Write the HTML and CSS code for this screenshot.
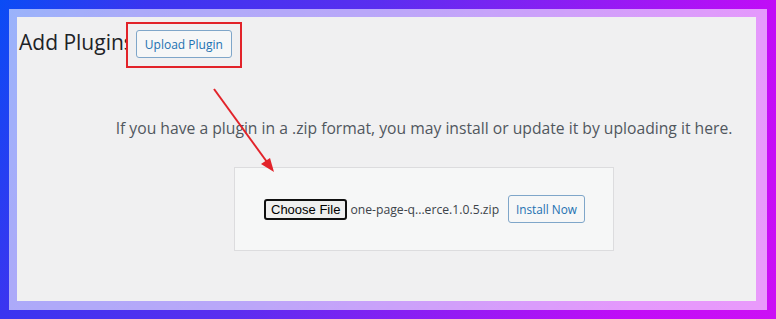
FILE: index.html
```html
<!DOCTYPE html>
<html lang="en">

<head>
    <meta charset="UTF-8">
    <meta name="viewport" content="width=device-width, initial-scale=1.0">
    <title>Add Plugins</title>
    <link rel="stylesheet" href="styles.css">
</head>

<body>
    <div class="frame">
        <div class="frame-inner">
            <div class="panel">
                <div class="page-header">
                    <h1>Add Plugins</h1>
                    <div class="highlight">
                        <button class="wp-button">Upload Plugin</button>
                    </div>
                </div>

                <!-- annotation arrow -->
                <svg class="arrow" width="80" height="90" viewBox="0 0 80 90">
                    <line x1="2" y1="2" x2="55" y2="75" stroke="#e2232a" stroke-width="2" />
                    <polygon points="62,85 49,77 58,71" fill="#e2232a" />
                </svg>

                <div class="upload-wrap">
                    <p class="install-help">If you have a plugin in a .zip format, you may install or update it by uploading it here.</p>
                    <form class="upload-form">
                        <span class="file-button">Choose File</span>
                        <span class="file-name">one-page-q...erce.1.0.5.zip</span>
                        <button type="button" class="wp-button">Install Now</button>
                    </form>
                </div>
            </div>
        </div>
    </div>
</body>

</html>
```

FILE: styles.css
```css
body {
    margin: 0;
    font-family: "Open Sans", "Noto Sans", sans-serif;
}

.frame {
    width: 776px;
    height: 319px;
    box-sizing: border-box;
    padding: 9px;
    background: linear-gradient(115deg, #0a4cf5 0%, #3a35f0 16%, #5a2ef0 41%, #c10cf7 84%, #cc10f5 100%);
}

.frame-inner {
    height: 100%;
    box-sizing: border-box;
    padding: 8px 11px 9px 8px;
    background-color: rgba(255, 255, 255, 0.58);
}

.panel {
    position: relative;
    height: 100%;
    background-color: #f0f0f1;
    overflow: hidden;
}

.page-header {
    display: flex;
    align-items: flex-start;
    padding: 5px 0 0 2px;
}

h1 {
    margin: 0;
    font-size: 21px;
    font-weight: 400;
    line-height: 40px;
    color: #1d2327;
    white-space: nowrap;
}

.highlight {
    margin-left: -8px;
    padding: 6px 8px 8px 8px;
    border: 2px solid #e2232a;
    background-color: #f0f0f1;
}

.wp-button {
    height: 28px;
    padding: 0 8px;
    font-family: "Open Sans", "Noto Sans", sans-serif;
    font-size: 12px;
    color: #2271b1;
    background-color: #f6f7f7;
    border: 1px solid #7fa6c9;
    border-radius: 3px;
    white-space: nowrap;
}

.arrow {
    position: absolute;
    left: 195px;
    top: 70px;
}

.upload-wrap {
    margin-left: 83px;
    width: 648px;
    text-align: center;
}

.install-help {
    margin: 49px 0 0;
    font-size: 15.7px;
    color: #50575e;
    white-space: nowrap;
}

.upload-form {
    display: flex;
    align-items: center;
    width: 380px;
    height: 84px;
    box-sizing: border-box;
    margin: 28px auto 0;
    padding: 0 28px 0 29px;
    background-color: #f6f7f7;
    border: 1px solid #dcdcde;
    white-space: nowrap;
}

.file-button {
    padding: 1px 5px;
    font-family: "Liberation Sans", Arial, sans-serif;
    font-size: 13px;
    color: #000;
    background-color: #efefef;
    border: 2px solid #101010;
    border-radius: 3px;
}

.file-name {
    margin-left: 3px;
    font-size: 12.2px;
    color: #3c434a;
}

.upload-form .wp-button {
    margin-left: auto;
    height: 28px;
    padding: 0 7px;
    font-size: 11.8px;
}
```
